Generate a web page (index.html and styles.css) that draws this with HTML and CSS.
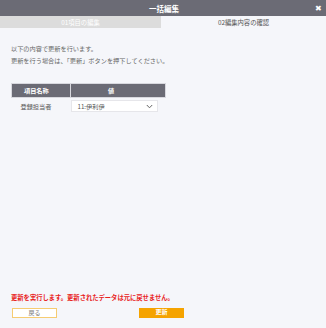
FILE: index.html
```html
<!doctype html>
<html>
<head>
<meta charset="utf-8">
<title>一括編集</title>
<link rel="stylesheet" href="styles.css">
</head>
<body>
<div class="dialog">
	<div class="hd">
		<span class="title">一括編集</span>
		<span class="close">&#x2716;</span>
	</div>
	<ul class="tabs">
		<li>01項目の編集</li>
		<li class="on">02編集内容の確認</li>
	</ul>
	<div class="bd">
		<p class="msg">以下の内容で更新を行います。<br>更新を行う場合は、「更新」ボタンを押下してください。</p>
		<table class="tbl">
			<tr><th class="c1">項目名称</th><th>値</th></tr>
			<tr>
				<td class="c1">登録担当者</td>
				<td><div class="sel"><span>11:伊利伊</span><svg width="7" height="5" viewBox="0 0 7 5"><path d="M0.8 1 L3.5 3.8 L6.2 1" fill="none" stroke="#666" stroke-width="1"/></svg></div></td>
			</tr>
		</table>
	</div>
	<div class="ft">
		<p class="warn">更新を実行します。更新されたデータは元に戻せません。</p>
		<div class="btns">
			<a href="javascript:;" class="btn back">戻る</a>
			<a href="javascript:;" class="btn ok">更新</a>
		</div>
	</div>
</div>
</body>
</html>
```

FILE: styles.css
```css
*{margin:0; padding:0; list-style:none; text-decoration:none; box-sizing:border-box;}
body{width:326px; height:328px; background:#f5f6fa; font-family:"Noto Sans CJK JP", sans-serif; color:#555; font-size:6.2px;}
.dialog{height:328px; display:flex; flex-direction:column;}
.hd{height:16px; background:#6b6b75; color:#fff; display:flex; align-items:center; justify-content:center; position:relative;}
.hd .title{font-size:7.5px; font-weight:bold; margin-left:2px;}
.hd .close{position:absolute; right:4px; top:3px; font-size:8px; line-height:10px; color:#fff;}
.tabs{display:flex; height:12px;}
.tabs li{flex:0 0 161px; background:#dcdcdc; color:#fff; display:flex; align-items:center; justify-content:center; font-size:6.3px;}
.tabs li.on{flex:1; background:#f5f6fa; color:#555;}
.bd{padding:15px 11px 0;}
.msg{line-height:12px; color:#666;}
.tbl{border-collapse:collapse; width:155px; margin-top:16px;}
.tbl th{background:#6b6b75; color:#fff; height:14px; font-weight:bold; border:1px solid #d8d8de; text-align:center; padding-right:14px;}
.tbl th.c1{width:59px; text-align:left; padding-left:12px; padding-right:0;}
.tbl td{height:17px; color:#555;}
.tbl td.c1{padding-left:9px;}
.sel{width:87px; height:12px; background:#fff; border:1px solid #e6e6ea; display:flex; align-items:center; justify-content:space-between; padding:0 4px 0 6px;}
.ft{margin-top:auto; padding:0 11px 10px;}
.warn{color:#e8211b; font-weight:bold; font-size:6.3px;}
.btns{display:flex; margin-top:6px; padding-left:1px;}
.btn{display:block; width:45px; height:10px; line-height:8px; text-align:center; font-size:6px;}
.btn.back{background:#fff; border:1px solid #f6cc72; color:#777;}
.btn.ok{background:#f5a300; color:#fff; margin-left:82px; font-weight:bold;}
```
